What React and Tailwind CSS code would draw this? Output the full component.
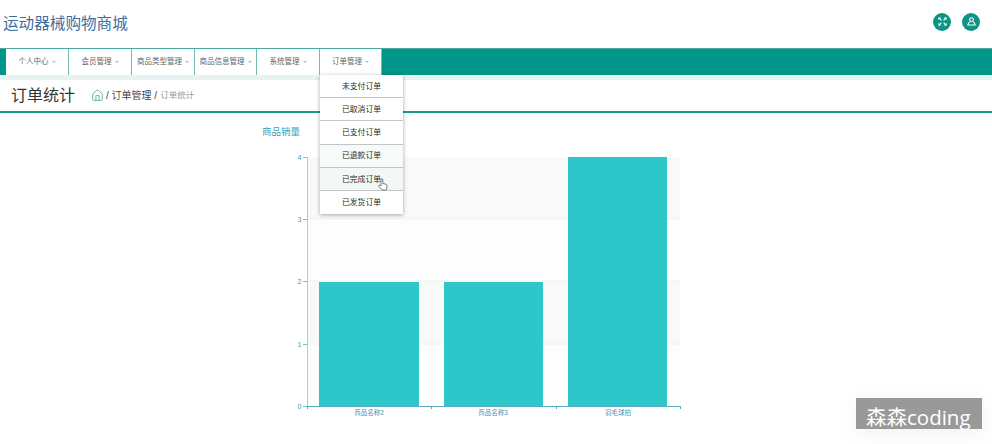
import React from "react";
import { Home } from "lucide-react";

const nav = [
  ["个人中心", "w-[63px]"],
  ["会员管理", "w-[63px]"],
  ["商品类型管理", "w-[63px]"],
  ["商品信息管理", "w-[62px]"],
  ["系统管理", "w-[63px]"],
  ["订单管理", "w-[62px]"],
];
const menu = ["未支付订单", "已取消订单", "已支付订单", "已退款订单", "已完成订单", "已发货订单"];

function Chart() {
  const bars = [
    [319, 282, 100, "商品名称2", 369],
    [444, 282, 99, "商品名称3", 493],
    [568, 157, 99, "羽毛球拍", 618],
  ];
  const sans = '"Liberation Sans","Noto Sans CJK SC",sans-serif';
  return (
    <svg width="992" height="294" viewBox="0 150 992 294" className="block">
      <rect x="308" y="157" width="372" height="62" fill="#f9f9f9" />
      <rect x="308" y="219" width="372" height="62" fill="#fdfdfd" />
      <rect x="308" y="281" width="372" height="63" fill="#f9f9f9" />
      <rect x="308" y="344" width="372" height="62" fill="#fdfdfd" />
      {[219, 281, 344].map((y) => <line key={y} x1="308" x2="680" y1={y} y2={y} stroke="#f1f1f1" />)}
      {bars.map(([x, y, w]) => <rect key={x} x={x} y={y} width={w} height={406 - y} fill="#2ec7c9" />)}
      <line x1="307.5" x2="307.5" y1="157" y2="406" stroke="#9fd3de" />
      <line x1="307" x2="681" y1="406.5" y2="406.5" stroke="#57a9bf" />
      {[[157, "4"], [219, "3"], [281, "2"], [344, "1"], [406, "0"]].map(([y, t]) => (
        <g key={t}>
          <line x1="303" x2="307" y1={y + 0.5} y2={y + 0.5} stroke="#79bccb" />
          <text x="301.5" y={y + 2.5} textAnchor="end" fontSize="7" fill="#3a9fbc" fontFamily={sans}>{t}</text>
        </g>
      ))}
      {[307, 431, 556, 680].map((x) => <line key={x} x1={x + 0.5} x2={x + 0.5} y1="406" y2="409" stroke="#57a9bf" />)}
      {bars.map(([x, , , t, cx]) => (
        <text key={t} x={cx} y="415" textAnchor="middle" fontSize="6.5" fill="#3f97bb" fontFamily={sans}>{t}</text>
      ))}
    </svg>
  );
}

export default function App() {
  return (
    <div className="relative w-[992px] h-[444px] overflow-hidden bg-white font-['Liberation_Sans','Noto_Sans_CJK_SC',sans-serif]">
      <header className="h-[48px] flex items-center justify-between pl-[3px] pr-[12px]">
        <div className="text-[15.6px] leading-[20px] text-[#3a6f9f]">运动器械购物商城</div>
        <div className="flex items-center gap-[11px] pb-[5px]">
          <span className="w-[18px] h-[18px] rounded-full bg-[#0e9384] flex items-center justify-center">
            <svg width="9" height="9" viewBox="0 0 11 11" fill="none" stroke="#fff" strokeWidth="1.5">
              <path d="M1 1l3.2 3.2M10 1L6.8 4.2M1 10l3.2-3.2M10 10L6.8 6.8" />
              <path d="M1 3.4V1h2.4M7.6 1H10v2.4M1 7.6V10h2.4M7.6 10H10V7.6" strokeWidth="1.1" />
            </svg>
          </span>
          <span className="w-[18px] h-[18px] rounded-full bg-[#0e9384] flex items-center justify-center">
            <svg width="9" height="9" viewBox="0 0 11 11" fill="none" stroke="#fff" strokeWidth="1.4">
              <circle cx="5.5" cy="3.2" r="2.3" />
              <path d="M3.8 5.8C2.4 6.3 1.2 7.2 1 9.8h9C9.8 7.2 8.6 6.3 7.2 5.8" />
            </svg>
          </span>
        </div>
      </header>

      <nav className="h-[27px] bg-[#009688] border-t border-[#4aa99c] pl-[6px] flex">
        {nav.map(([t, w]) => (
          <div key={t} className={`${w} h-[26px] bg-white border-r border-[#74bbaf] flex items-center justify-center gap-[3px] text-[7.5px] text-[#666] whitespace-nowrap`}>
            {t}
            <span className="w-0 h-0 border-x-[2px] border-x-transparent border-t-[2px] border-t-[#bbb]" />
          </div>
        ))}
      </nav>
      <div className="h-[5px] bg-[#e6f3f0]" />

      <section className="h-[33px] border-b-2 border-[#1c9a8b] flex items-center pl-[11px]">
        <h1 className="text-[16px] leading-[20px] text-[#333] w-[80px]">订单统计</h1>
        <div className="flex items-center text-[10px] text-[#444]">
          <Home size={13} color="#4aa99c" strokeWidth={1.5} />
          <span className="ml-[2px]">/ 订单管理 /</span>
          <span className="ml-[3px] text-[#999] text-[8.5px]">订单统计</span>
        </div>
      </section>

      <div className="pl-[262px] pt-[13px] h-[37px] text-[9.5px] leading-[12px] text-[#3a9fbc]">商品销量</div>
      <Chart />

      <div className="absolute left-[320px] top-[75px] w-[83px] bg-white shadow-[0_1px_4px_rgba(0,0,0,0.35)]">
        {menu.map((m, i) => (
          <div
            key={m}
            className={`h-[23.2px] pt-[1px] flex items-center justify-center text-[7.8px] text-[#2a2a2a] ${i < 5 ? "border-b border-[#c4c4c4]" : ""} ${i === 3 ? "bg-[#f6faf9]" : ""} ${i === 4 ? "bg-[#f2f8f8]" : ""}`}
          >
            {m}
          </div>
        ))}
      </div>

      <svg className="absolute left-[378px] top-[178px]" width="10" height="13" viewBox="0 0 10 13">
        <path d="M3 6V1.6a.9.9 0 0 1 1.8 0V5.5l3 .7c.8.2 1.3.8 1.2 1.6L8.6 11c-.1.6-.5 1-1.1 1H4.6c-.4 0-.7-.2-1-.5L1 8.5c-.4-.5-.3-1 .1-1.3.4-.3.9-.2 1.2.1L3 8z" fill="#fff" stroke="#555" strokeWidth="0.8" />
      </svg>

      <div className="absolute left-[856px] top-[398px] w-[126px] h-[31px] bg-[#999] text-white text-[20.5px] leading-[23px] pt-[8px] pl-[10px] shadow-[0_4px_24px_rgba(0,0,0,0.06)] whitespace-nowrap font-['Open_Sans','Noto_Sans_CJK_SC',sans-serif]">森森coding</div>
    </div>
  );
}
